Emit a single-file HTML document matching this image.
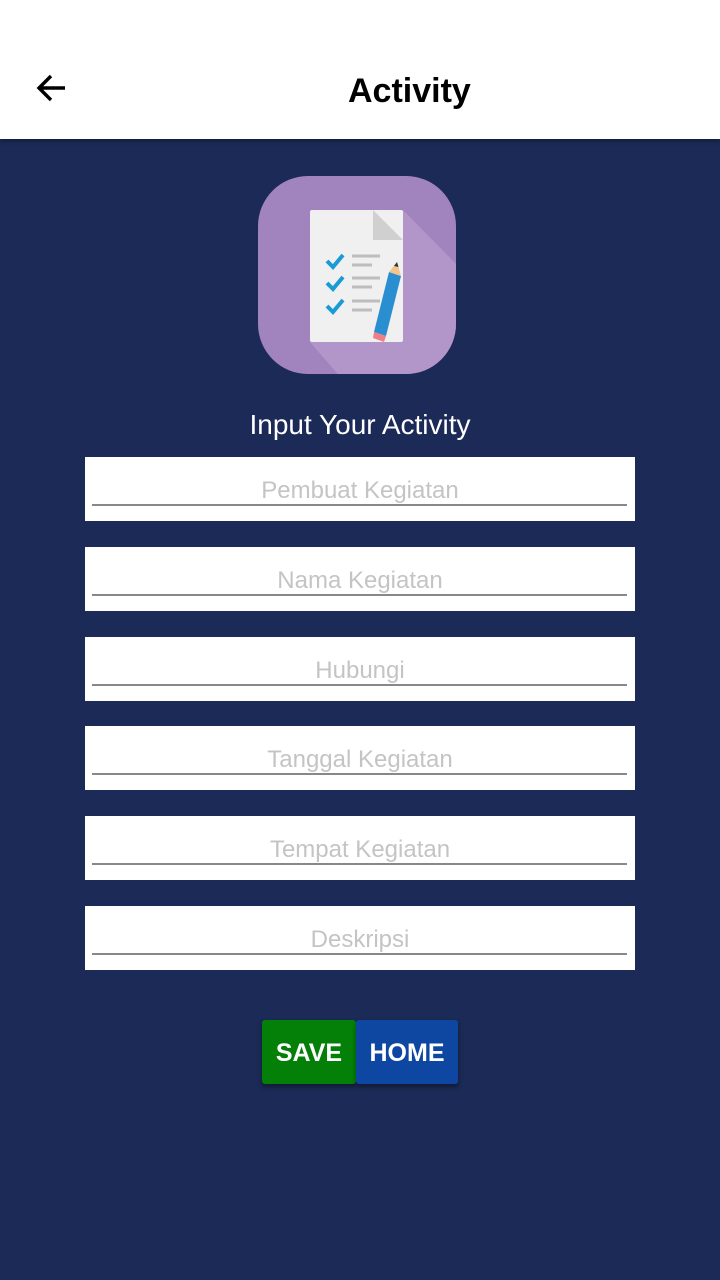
<!DOCTYPE html>
<html><head><meta charset="utf-8"><style>
*{margin:0;padding:0;box-sizing:border-box}
body{width:720px;height:1280px;background:#1b2a56;font-family:"Liberation Sans",sans-serif;position:relative;overflow:hidden}
.hdr{position:absolute;left:0;top:0;width:720px;height:139px;background:#fff;box-shadow:0 2px 4px rgba(0,0,0,.35)}
.title{position:absolute;left:348px;top:72px;font-size:34px;font-weight:bold;color:#000}
.f{position:absolute;left:85px;width:550px;height:64px;background:#fff}
.f span{position:absolute;left:0;right:0;top:20px;text-align:center;font-size:24px;color:#c4c4c4}
.f i{position:absolute;left:7px;right:8px;top:47px;height:2px;background:#888}
.btn{position:absolute;top:1020px;height:64px;color:#fff;font-weight:bold;font-size:25px;text-align:center;line-height:66px;border-radius:3px;box-shadow:0 3px 5px rgba(0,0,0,.4)}
</style></head><body>
<div class="hdr">
<svg style="position:absolute;left:34px;top:72px" width="34" height="34" viewBox="0 0 34 34"><path d="M31 16H7M17 4L5 16l12 12" stroke="#000" stroke-width="3.4" fill="none"/></svg>
<div class="title">Activity</div>
</div>
<svg style="position:absolute;left:258px;top:176px" width="198" height="198" viewBox="0 0 198 198">
<defs><clipPath id="c"><rect width="198" height="198" rx="50"/></clipPath></defs>
<g clip-path="url(#c)">
<rect width="198" height="198" fill="#a183bd"/>
<path d="M145 34L210 100V210H90L52 166Z" fill="#b295c9"/>
<rect x="52" y="34" width="93" height="132" fill="#f0f0f0" rx="2"/>
<path d="M115 34L145 64H115Z" fill="#d0d0d0"/>
<g stroke="#1a9bd5" stroke-width="4" fill="none"><path d="M69 85l6 6 10-12M69 107l6 6 10-12M69 130l6 6 10-12"/></g>
<g stroke="#bdbdbd" stroke-width="3"><path d="M94 80h28M94 89h20M94 102h28M94 111h20M94 125h28M94 134h20"/></g>
<path d="M131 96L143 100 128 160 116 156Z" fill="#2a8fd0"/>
<path d="M116 156l12 4-2 6-11-4z" fill="#ef7f84"/>
<path d="M131 96l8-10 4 14z" fill="#f2c48e"/><path d="M136 90l3-4 1.5 5z" fill="#333"/>
</g></svg>
<div style="position:absolute;left:0;width:720px;top:409px;text-align:center;color:#fff;font-size:28px">Input Your Activity</div>
<div class="f" style="top:457px"><span>Pembuat Kegiatan</span><i></i></div>
<div class="f" style="top:547px"><span>Nama Kegiatan</span><i></i></div>
<div class="f" style="top:637px"><span>Hubungi</span><i></i></div>
<div class="f" style="top:726px"><span>Tanggal Kegiatan</span><i></i></div>
<div class="f" style="top:816px"><span>Tempat Kegiatan</span><i></i></div>
<div class="f" style="top:906px"><span>Deskripsi</span><i></i></div>
<div class="btn" style="left:262px;width:94px;background:#047f07">SAVE</div>
<div class="btn" style="left:356px;width:102px;background:#0e47a1">HOME</div>
</body></html>
